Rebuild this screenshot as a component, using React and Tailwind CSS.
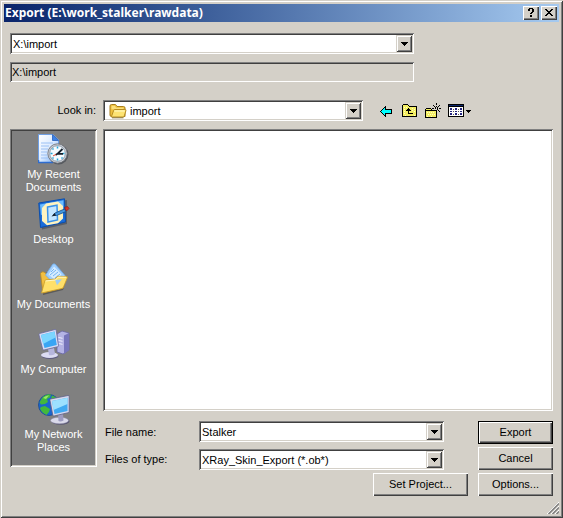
import React, { useState } from "react";

const SUNKEN =
  "p-0.5 shadow-[inset_1px_1px_0_#808080,inset_-1px_-1px_0_#ffffff,inset_2px_2px_0_#404040,inset_-2px_-2px_0_#d4d0c8]";
const RAISED =
  "bg-[#d4d0c8] shadow-[inset_1px_1px_0_#ffffff,inset_-1px_-1px_0_#404040,inset_-2px_-2px_0_#808080]";
const ARROW =
  "bg-[#d4d0c8] shadow-[inset_1px_1px_0_#d4d0c8,inset_-1px_-1px_0_#404040,inset_2px_2px_0_#ffffff,inset_-2px_-2px_0_#808080]";

function Caret() {
  return (
    <svg width="7" height="4" viewBox="0 0 7 4" shapeRendering="crispEdges" aria-hidden="true">
      <path d="M0 0h7v1H0zM1 1h5v1H1zM2 2h3v1H2zM3 3h1v1H3z" />
    </svg>
  );
}

function Combo({ id, label, value, icon }) {
  const [current, setCurrent] = useState(value);
  return (
    <div className={`relative flex h-[21px] min-w-0 flex-1 items-center bg-white ${SUNKEN}`}>
      {icon}
      <select
        id={id}
        aria-label={label}
        value={current}
        onChange={(e) => setCurrent(e.target.value)}
        className="h-full min-w-0 flex-1 appearance-none bg-white pr-4 pl-px leading-4 outline-none"
      >
        <option>{value}</option>
      </select>
      <span className={`pointer-events-none absolute inset-y-0.5 right-0.5 flex w-4 items-center justify-center ${ARROW}`}>
        <Caret />
      </span>
    </div>
  );
}

function EditCombo({ id, label, value }) {
  return (
    <div className={`flex h-[21px] min-w-0 flex-1 bg-white ${SUNKEN}`}>
      <input id={id} aria-label={label} defaultValue={value} className="min-w-0 flex-1 bg-white pl-px leading-4 outline-none" />
      <button type="button" aria-label="Show choices" className={`flex w-4 items-center justify-center ${ARROW}`}>
        <Caret />
      </button>
    </div>
  );
}

function PushButton({ children, wide, primary }) {
  return (
    <button
      type={primary ? "submit" : "button"}
      className={`h-[23px] ${wide ? "w-[95px]" : "w-[75px]"} ${primary ? "border border-black" : ""} ${RAISED}`}
    >
      {children}
    </button>
  );
}

function FolderIcon() {
  return (
    <svg width="18" height="16" viewBox="0 0 18 16" className="mr-0.5 ml-1 shrink-0" aria-hidden="true">
      <path d="M1 3q0-1.500 1.500-1.500h3.500q.8 0 1.300.8l.7 1.200h6.500q1.500 0 1.500 1.500v8.500H2.500Q1 13.500 1 12z" fill="#eebf3c" stroke="#a87f1c" />
      <path d="M2.500 3.500q0-.8.8-.8h2.500l1.200 2h7.500v1.500H2.500z" fill="#fbe07c" />
      <path d="M2.300 14 4.700 7.300q.3-.8 1.200-.8h10q1.400 0 1 1.200l-1.700 5.500q-.3.800-1.200.8z" fill="#fde372" stroke="#b88d22" />
      <path d="m5.300 8h10.500" stroke="#fffac8" />
      <path d="M3 14.800h11.500" stroke="#6f5510" strokeWidth=".8" />
    </svg>
  );
}

function BackIcon() {
  return (
    <svg width="16" height="16" viewBox="0 0 16 16" shapeRendering="crispEdges" aria-hidden="true">
      <path d="M1 8h1V7h1V6h1V5h1V4h1V3h1v3h6v5H7v3H6v-1H5v-1H4v-1H3v-1H2V9H1z" />
      <path d="M2 8h1V7h1V6h1V5h1v2h6v3H6v2H5v-1H4v-1H3V9H2z" fill="#00ffff" />
    </svg>
  );
}

function UpIcon() {
  return (
    <svg width="16" height="16" viewBox="0 0 16 16" shapeRendering="crispEdges" aria-hidden="true">
      <path d="M1 1h5v1h1v1h8v11H0V2h1z" />
      <path d="M1 2h5v1h1v1h7v9H1z" fill="#f3ee62" />
      <path d="M2 4h1v1H2zM4 4h1v1H4zM2 6h1v1H2zM2 8h1v1H2zM2 10h1v1H2zM12 6h1v1h-1zM12 8h1v1h-1zM10 5h1v1h-1zM10 7h1v1h-1zM3 12h1v1H3zM12 12h1v1h-1z" fill="#ffffc8" />
      <path d="M6 5h1v1h1v1h1v1H7v2h4v1H6V8H4V7h1V6h1z" />
    </svg>
  );
}

function NewFolderIcon() {
  return (
    <svg width="16" height="16" viewBox="0 0 16 16" shapeRendering="crispEdges" aria-hidden="true">
      <path d="M1 5h5v1h1v1h5v8H0V6h1z" />
      <path d="M1 6h5v1H1zM1 8h10v6H1z" fill="#f3ee62" />
      <path d="M2 9h1v1H2zM4 9h1v1H4zM6 9h1v1H6zM8 9h1v1H8zM3 11h1v1H3zM5 11h1v1H5zM7 11h1v1H7zM9 11h1v1H9zM2 13h1v1H2zM6 13h1v1H6z" fill="#ffffc8" />
      <path d="M11 0h1v2h-1zM11 3h1v1h-1zM11 7h1v2h-1zM7 5h2v1H7zM10 5h1v1h-1zM12 5h1v1h-1zM14 5h2v1h-2zM8 2h1v1H8zM9 3h1v1H9zM10 4h1v1h-1zM14 2h1v1h-1zM13 3h1v1h-1zM12 4h1v1h-1zM9 7h1v1H9zM13 7h1v1h-1zM14 8h1v1h-1zM12 6h1v1h-1z" />
    </svg>
  );
}

function ViewIcon() {
  return (
    <svg width="24" height="16" viewBox="0 0 24 16" shapeRendering="crispEdges" aria-hidden="true">
      <path d="M0 1h16v13H0z" />
      <path d="M1 2h14v1H1z" fill="#0a246a" />
      <path d="M1 4h14v9H1z" fill="#fff" />
      <path d="M2 5h2v2H2zM7 5h2v2H7zM12 5h2v2h-2zM2 8h2v1H2zM7 8h2v1H7zM12 8h2v1h-2zM2 10h2v2H2zM7 10h2v2H7zM12 10h2v2h-2z" fill="#23237e" />
      <path d="M5 6h1v1H5zM10 6h1v1h-1zM5 8h1v1H5zM10 8h1v1h-1zM5 11h1v1H5zM10 11h1v1h-1z" fill="#555" />
      <path d="M18 7h5v1h-5zM19 8h3v1h-3zM20 9h1v1h-1z" />
    </svg>
  );
}

function RecentIcon() {
  return (
    <svg width="32" height="32" viewBox="0 0 32 32" aria-hidden="true">
      <defs>
        <linearGradient id="page" x1="0" y1="0" x2="1" y2="1">
          <stop offset="0" stopColor="#fff" />
          <stop offset=".5" stopColor="#dcebff" />
          <stop offset="1" stopColor="#6aa5f4" />
        </linearGradient>
      </defs>
      <path d="M.5 1.500H15l5.500 5.500V29.500H.5z" fill="url(#page)" stroke="#6f9fe4" />
      <path d="M14.500 1.500v6h6z" fill="#3f82e4" stroke="#3b72c8" />
      <path d="M3 10h12M3 13h8M3 16h7M3 19h6M3 22h6M3 25h7" stroke="#9bc0f4" />
      <path d="M.5 27v2.500H15" stroke="#2d6cd0" strokeWidth="1.500" fill="none" />
      <circle cx="20.500" cy="21.500" r="10" fill="#3b3f48" opacity=".6" />
      <circle cx="19.500" cy="20.500" r="9.700" fill="#c9ccd2" stroke="#686c74" strokeWidth=".8" />
      <circle cx="19.500" cy="20.500" r="7.800" fill="#f4fbff" stroke="#7e8ea0" strokeWidth=".8" />
      <path d="M19.500 13.500v2M19.500 25.500v2M12.500 20.500h2M24.500 20.500h2M14.500 15.500l1 1M24.500 25.500l-1-1M14.500 25.500l1-1" stroke="#22a4d8" strokeWidth="1.500" />
      <path d="m24.500 16-5 4.800h5.500M19.500 20.800l-2 1.200" stroke="#15202c" strokeWidth="1.800" fill="none" />
      <path d="m15 23 3-1.700" stroke="#e2482c" />
    </svg>
  );
}

function DesktopIcon() {
  return (
    <svg width="32" height="32" viewBox="0 0 32 32" aria-hidden="true">
      <path d="M3 7 29 2v24L4 31.500z" fill="#404858" opacity=".6" />
      <path d="M.8 5 26.500.8 27.500 24 2.500 29.500z" fill="#1a6ddb" stroke="#0b4fae" />
      <path d="M2 6.500 25.500 2.300v9L3 17z" fill="#6bbcff" />
      <path d="m8 5.500 12-2L25 8v12.500l-5 4.700L9 27.300 4 23V10z" fill="#fff4c0" />
      <path d="m9.500 9 9.500-1.800.5 14.800-9.500 2z" fill="#c4e6ff" stroke="#3a93ea" strokeWidth="1.500" />
      <path d="m15 17.500 2-2.500 9.500-4 1.500 2.500-9.500 4z" fill="#4597df" stroke="#174c87" strokeWidth=".8" />
      <path d="m26.500 9.500 3-1 1.500 2-2.500 2.500z" fill="#d83322" stroke="#8e1d16" strokeWidth=".7" />
      <path d="m13.500 18.500 3-3.500 1.500 2.500z" fill="#15202c" />
    </svg>
  );
}

function DocumentsIcon() {
  return (
    <svg width="32" height="32" viewBox="0 0 32 32" aria-hidden="true">
      <path d="m5 12 4-3 5 4 15 1-4 13-20 5z" fill="#353535" opacity=".5" />
      <path d="M2.500 10.500q1-2.500 3.500-1.500l4 3 18 1-3 12-20 5z" fill="#f2bf42" stroke="#b98b26" strokeWidth=".8" />
      <path d="m7.500 12 7-10.500q1.500-1.500 3 0L27 12.500l-8 11z" fill="#9fcfff" stroke="#6da9e8" strokeWidth=".8" />
      <path d="m10.500 11.500 5.500-8 7.500 8-6 6z" fill="#d6ecff" />
      <path d="m13 9 3-3m-4 6 6-5M15 13l5-4M17 15l5-4" stroke="#75b4f1" />
      <path d="m3.500 30 3.300-12q.3-1 1.400-1.200l9-.8 2.500-2.700 8.800.2q1.300.1.900 1.200L25.500 24q-.4 1.200-1.500 1.500z" fill="#ffe06a" stroke="#c79b2b" strokeWidth=".8" />
      <path d="m17 17 7-.8-5 6z" fill="#9bcdf6" />
      <path d="m7.500 18 10-1 2.500-2.800h8" stroke="#fff6c4" fill="none" />
    </svg>
  );
}

function ComputerIcon() {
  return (
    <svg width="32" height="32" viewBox="0 0 32 32" aria-hidden="true">
      <path d="m19 6 5-3 7 2v17l-6 4-6-2z" fill="#b4b3e4" stroke="#6866a4" strokeWidth=".8" />
      <path d="m26 7.500 5-2.500v17l-5 4z" fill="#7674b9" />
      <path d="M20.500 9.500l4 .8M20.500 12.500l4 .8M20.500 15.500l4 .8" stroke="#f1f1ff" />
      <ellipse cx="12" cy="28" rx="8.500" ry="3" fill="#5d5b7f" />
      <ellipse cx="11.500" cy="27" rx="8.500" ry="3" fill="#dcdcf2" />
      <path d="m10 21 6-1 1 6q-3 2-6 1z" fill="#b6b6dd" />
      <path d="m1.500 5.500 15.500-4q1-.2 1.200.8l2.300 15.200q.2 1-.8 1.200L6 22q-1 .2-1.300-.8L1 7q-.2-1 .5-1.500z" fill="#d9dbf4" stroke="#686a9b" strokeWidth=".8" />
      <path d="M3 7 16.500 3.500l2.300 13.500L6.500 20z" fill="#39a5f4" />
      <path d="M3 7 16.500 3.500l1 6L5 16z" fill="#7cd6ff" />
    </svg>
  );
}

function NetworkIcon() {
  return (
    <svg width="32" height="32" viewBox="0 0 32 32" aria-hidden="true">
      <circle cx="11" cy="12" r="10.500" fill="#1a65cf" stroke="#174891" strokeWidth=".8" />
      <path d="M4 5q4-4.500 9-3.500l-1 3-3 1.500 1 3-3 2-4 .5-1.500-2zM14 2.500q4 1 5.500 4L16 8l-3-2zM3 14l4-1 5 3-1 3-2.500 3Q4 20 2 15.500z" fill="#43b83d" />
      <path d="M5 5q3-3 6-2.500L8 6z" fill="#96e867" />
      <ellipse cx="22.500" cy="28.300" rx="9" ry="3.500" fill="#55536e" />
      <ellipse cx="21.500" cy="27.500" rx="9" ry="3.300" fill="#d9d9e9" stroke="#8e8da8" strokeWidth=".5" />
      <path d="m20 21 5-.5.500 7q-3 1.500-5 .5z" fill="#9c9bbf" />
      <path d="M12.500 6 30 2.500q1.200-.2 1.200 1V18.500q0 1-1 1.200L16 23q-1 .2-1.200-.8L12 7.500q-.2-1.200.5-1.500z" fill="#d5d7ec" stroke="#5e6085" strokeWidth=".8" />
      <path d="M14 8 29.500 4.700V18L16.500 21z" fill="#41aaf2" />
      <path d="M14 8 29.500 4.700V11L15.500 17z" fill="#9de1ff" />
    </svg>
  );
}

const PLACES = [
  { label: "My Recent Documents", Icon: RecentIcon },
  { label: "Desktop", Icon: DesktopIcon },
  { label: "My Documents", Icon: DocumentsIcon, oneLine: true },
  { label: "My Computer", Icon: ComputerIcon, oneLine: true },
  { label: "My Network Places", Icon: NetworkIcon },
];

const TOOLS = [
  { label: "Back", Icon: BackIcon },
  { label: "Up one level", Icon: UpIcon },
  { label: "New folder", Icon: NewFolderIcon },
];

export default function App() {
  return (
    <form
      onSubmit={(e) => e.preventDefault()}
      className="flex min-h-screen w-full flex-col bg-[#d4d0c8] p-1 font-['Liberation_Sans',Arial,sans-serif] text-[11px] leading-[13px] text-black shadow-[inset_1px_1px_0_#d4d0c8,inset_-1px_-1px_0_#404040,inset_2px_2px_0_#ffffff,inset_-2px_-2px_0_#808080]"
    >
      <header className="flex h-[18px] items-center bg-linear-to-r from-[#0a246a] to-[#a6caf0] pr-0.5 pl-px">
        <h1 className="flex-1 font-['Noto_Sans','DejaVu_Sans',sans-serif] text-[12px] leading-4 font-bold text-white">
          Export (E:\work_stalker\rawdata)
        </h1>
        <div className="flex gap-0.5">
          <button type="button" aria-label="Help" className={`flex h-3.5 w-4 items-center justify-center ${RAISED}`}>
            <svg width="8" height="10" viewBox="0 0 8 10" shapeRendering="crispEdges" aria-hidden="true">
              <path d="M2 0h4v1h1v3H6v1H5v1H3V5h1V4h1V1H3v2H1V1h1zM3 7h2v2H3z" />
            </svg>
          </button>
          <button type="button" aria-label="Close" className={`flex h-3.5 w-4 items-center justify-center ${RAISED}`}>
            <svg width="8" height="8" viewBox="0 0 8 8" shapeRendering="crispEdges" aria-hidden="true">
              <path d="M0 0h2v1h1v1h2V1h1V0h2v1H7v1H6v1H5v1h1v1h1v1h1v1H6V6H5V5H3v1H2v1H0V6h1V5h1V4h1V3H2V2H1V1H0z" />
            </svg>
          </button>
        </div>
      </header>

      <div className="flex flex-1 flex-col px-1.5 pt-[11px]">
        <div className="mr-[139px] flex">
          <EditCombo id="path" label="Path" value="X:\import" />
        </div>
        <div className={`mt-2 mr-[139px] flex h-5 ${SUNKEN}`}>
          <input aria-label="Current path" readOnly value="X:\import" className="min-w-0 flex-1 bg-[#d4d0c8] leading-4 outline-none" />
        </div>

        <div className="mt-[18px] flex items-center">
          <label htmlFor="look-in" className="w-[93px] pr-[7px] text-right">
            Look in:
          </label>
          <Combo id="look-in" value="import" icon={<FolderIcon />} />
          <div className="flex w-[190px] items-center pl-3">
            {TOOLS.map(({ label, Icon }) => (
              <button key={label} type="button" aria-label={label} className="flex w-[23px] justify-center">
                <Icon />
              </button>
            ))}
            <button type="button" aria-label="View menu" className="pl-1">
              <ViewIcon />
            </button>
          </div>
        </div>

        <main className="mt-2 flex flex-1 gap-1.5">
          <nav className={`mb-[3px] w-[87px] shrink-0 bg-[#808080] ${SUNKEN}`}>
            <ul className="pt-0.5">
              {PLACES.map(({ label, Icon, oneLine }) => (
                <li key={label} className="h-[65px]">
                  <button type="button" className="flex w-full flex-col items-center gap-[3px] text-center text-white">
                    <Icon />
                    <span className={oneLine ? "whitespace-nowrap" : "px-1"}>{label}</span>
                  </button>
                </li>
              ))}
            </ul>
          </nav>

          <div className="flex min-w-0 flex-1 flex-col gap-2.5">
            <div role="listbox" aria-label="Files" className={`min-h-40 flex-1 bg-white ${SUNKEN}`} />
            <div className="flex gap-[34px]">
              <div className="flex flex-1 flex-col gap-[7px]">
                <div className="flex items-center">
                  <label htmlFor="file-name" className="w-24 pt-0.5 pl-0.5">
                    File name:
                  </label>
                  <EditCombo id="file-name" value="Stalker" />
                </div>
                <div className="flex items-center">
                  <label htmlFor="file-type" className="w-24 pl-0.5">
                    Files of type:
                  </label>
                  <Combo id="file-type" value="XRay_Skin_Export (*.ob*)" />
                </div>
              </div>
              <div className="flex flex-col gap-[3px]">
                <PushButton primary>Export</PushButton>
                <PushButton>Cancel</PushButton>
              </div>
            </div>
          </div>
        </main>

        <footer className="mt-[3px] flex justify-end gap-2.5">
          <PushButton wide>Set Project...</PushButton>
          <PushButton>Options...</PushButton>
        </footer>
      </div>

      <svg width="12" height="12" viewBox="0 0 12 12" className="mt-1.5 self-end" aria-hidden="true">
        <path d="M0 12 12 0M4 12l8-8M8 12l4-4" stroke="#fff" />
        <path d="M1.500 12 12 1.500M5.500 12 12 5.500M9.500 12 12 9.500" stroke="#808080" strokeWidth="1.500" />
      </svg>
    </form>
  );
}
